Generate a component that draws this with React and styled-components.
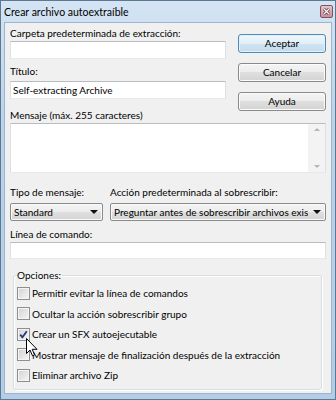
import React from "react";
import styled, { createGlobalStyle } from "styled-components";

const GlobalStyle = createGlobalStyle`
  html, body {
    margin: 0;
    padding: 0;
    background: #ffffff;
  }
  body {
    font-family: Lato, "Noto Sans", sans-serif;
    font-size: 10px;
    color: #000000;
  }
  * {
    box-sizing: border-box;
  }
`;

const Window = styled.div`
  position: relative;
  width: 336px;
  height: 400px;
  display: flex;
  flex-direction: column;
  border: 1px solid #5b7a92;
  padding: 0 3px 5px 3px;
  background: linear-gradient(#d4e4f4, #bcd3ea 30%, #b4cde6);
`;

const TitleBar = styled.div`
  height: 21px;
  margin: 0 -3px;
  padding: 0 2px 0 3px;
  display: flex;
  align-items: center;
  justify-content: space-between;
`;

const Title = styled.span`
  font-size: 10.5px;
  color: #000000;
`;

const CloseButton = styled.div`
  width: 13px;
  height: 13px;
  margin-top: -1px;
  border: 1px solid #7d5663;
  border-radius: 2px;
  background: linear-gradient(#e9c4cb, #c98b98);
  display: flex;
  align-items: center;
  justify-content: center;
`;

const Body = styled.div`
  flex: 1;
  min-width: 0;
  display: flex;
  flex-direction: column;
  background: #f0f0f0;
  border: 1px solid #9db5cc;
  padding: 3px 5px 0 5px;
`;

const TopRow = styled.div`
  display: flex;
  gap: 12px;
`;

const LeftColumn = styled.div`
  width: 216px;
  display: flex;
  flex-direction: column;
`;

const ButtonColumn = styled.div`
  width: 88px;
  padding-top: 8px;
  display: flex;
  flex-direction: column;
  gap: 10px;
`;

const Label = styled.div`
  height: 15px;
  line-height: 15px;
  white-space: nowrap;
  margin-top: ${(p) => p.$top || 0}px;
`;

const TextInput = styled.div`
  height: ${(p) => p.$height || 18}px;
  margin-top: ${(p) => p.$top || 0}px;
  background: #ffffff;
  border: 1px solid #dbdfe6;
  border-top-color: #b9bcc2;
  border-bottom-color: #e3e9ef;
  padding: 0 2px;
  line-height: 16px;
  white-space: nowrap;
  overflow: hidden;
`;

const Button = styled.div`
  height: 19px;
  border: 1px solid ${(p) => (p.$default ? "#4f8ab6" : "#8a8a8a")};
  border-radius: 3px;
  box-shadow: inset 0 0 0 1px ${(p) => (p.$default ? "#e3f1fa" : "#fbfbfb")};
  background: ${(p) =>
    p.$default
      ? "linear-gradient(#eef6fb 0%, #e2eff8 50%, #cfe4f2 50%, #c3dcee 100%)"
      : "linear-gradient(#f4f4f4 0%, #ececec 50%, #dfdfdf 50%, #d3d3d3 100%)"};
  display: flex;
  align-items: center;
  justify-content: center;
  line-height: 15px;
`;

const MessageBox = styled.div`
  height: 50px;
  display: flex;
  background: #ffffff;
  border: 1px solid #dbdfe6;
  border-top-color: #b9bcc2;
  border-bottom-color: #e3e9ef;
`;

const MessageArea = styled.div`
  flex: 1;
`;

const ScrollBar = styled.div`
  width: 17px;
  background: #f3f3f3;
  display: flex;
  flex-direction: column;
  justify-content: space-between;
  align-items: center;
  padding: 4px 0 4px 0;
`;

const Arrow = styled.span`
  width: 0;
  height: 0;
  border-left: 3px solid transparent;
  border-right: 3px solid transparent;
  ${(p) =>
    p.$up
      ? "border-bottom: 3px solid #b5b5b5;"
      : "border-top: 3px solid #b5b5b5;"}
`;

const SelectGrid = styled.div`
  margin-top: 12px;
  display: grid;
  grid-template-columns: 93px minmax(0, 1fr);
  column-gap: 7px;
`;

const SelectCell = styled.div`
  display: flex;
  flex-direction: column;
  gap: 3px;
  min-width: 0;
`;

const Select = styled.div`
  height: 18px;
  display: flex;
  align-items: center;
  border: 1px solid #8a8a8a;
  border-radius: 2px;
  box-shadow: inset 0 0 0 1px #fbfbfb;
  background: linear-gradient(#f4f4f4 0%, #ececec 50%, #dfdfdf 50%, #d3d3d3 100%);
  padding: 0 0 0 3px;
`;

const SelectText = styled.span`
  flex: 1;
  min-width: 0;
  white-space: nowrap;
  overflow: hidden;
  line-height: 15px;
`;

const SelectArrow = styled.span`
  width: 17px;
  flex-shrink: 0;
  display: flex;
  justify-content: center;
  &::after {
    content: "";
    border-left: 4px solid transparent;
    border-right: 4px solid transparent;
    border-top: 4px solid #111111;
  }
`;

const Group = styled.fieldset`
  min-width: 0;
  margin: 9px 4px 0 3px;
  padding: 0 3px 3px 3px;
  border: 1px solid #d5dfe5;
  border-radius: 3px;
  box-shadow: inset 1px 1px 0 #ffffff, 1px 1px 0 #ffffff;
`;

const Legend = styled.legend`
  padding: 0 1px 0 0;
  line-height: 15px;
`;

const CheckRow = styled.div`
  height: 20.5px;
  display: flex;
  align-items: center;
  gap: 2px;
  white-space: nowrap;
`;

const CheckBox = styled.span`
  width: 13px;
  height: 13px;
  flex-shrink: 0;
  border: 1px solid #8f8f8f;
  background: linear-gradient(135deg, #d2d2d2, #f6f6f6);
  box-shadow: inset 0 0 0 1px #f4f4f4;
  display: flex;
  align-items: center;
  justify-content: center;
`;

const Cursor = styled.svg`
  position: absolute;
  left: 25px;
  top: 337px;
`;

const options = [
  { label: "Permitir evitar la línea de comandos", checked: false },
  { label: "Ocultar la acción sobrescribir grupo", checked: false },
  { label: "Crear un SFX autoejecutable", checked: true },
  { label: "Mostrar mensaje de finalización después de la extracción", checked: false },
  { label: "Eliminar archivo Zip", checked: false },
];

export default function App() {
  return (
    <>
      <GlobalStyle />
      <Window>
        <TitleBar>
          <Title>Crear archivo autoextraíble</Title>
          <CloseButton>
            <svg width="7" height="7" viewBox="0 0 7 7">
              <path d="M1 1 L6 6 M6 1 L1 6" stroke="#4a2a33" strokeWidth="2.6" />
              <path d="M1 1 L6 6 M6 1 L1 6" stroke="#ffffff" strokeWidth="1.3" />
            </svg>
          </CloseButton>
        </TitleBar>
        <Body>
          <TopRow>
            <LeftColumn>
              <Label>Carpeta predeterminada de extracción:</Label>
              <TextInput />
              <Label $top={5}>Título:</Label>
              <TextInput $top={2}>Self-extracting Archive</TextInput>
              <Label $top={9}>Mensaje (máx. 255 caracteres)</Label>
            </LeftColumn>
            <ButtonColumn>
              <Button $default>Aceptar</Button>
              <Button>Cancelar</Button>
              <Button>Ayuda</Button>
            </ButtonColumn>
          </TopRow>
          <MessageBox>
            <MessageArea />
            <ScrollBar>
              <Arrow $up />
              <Arrow />
            </ScrollBar>
          </MessageBox>
          <SelectGrid>
            <SelectCell>
              <Label>Tipo de mensaje:</Label>
              <Select>
                <SelectText>Standard</SelectText>
                <SelectArrow />
              </Select>
            </SelectCell>
            <SelectCell>
              <Label>Acción predeterminada al sobrescribir:</Label>
              <Select>
                <SelectText>Preguntar antes de sobrescribir archivos existentes</SelectText>
                <SelectArrow />
              </Select>
            </SelectCell>
          </SelectGrid>
          <Label $top={6}>Línea de comando:</Label>
          <TextInput $height={17} />
          <Group>
            <Legend>Opciones:</Legend>
            {options.map((o) => (
              <CheckRow key={o.label}>
                <CheckBox>
                  {o.checked && (
                    <svg width="9" height="9" viewBox="0 0 9 9">
                      <path d="M1.2 4.6 L3.4 7.2 L7.8 1.2" fill="none" stroke="#1f3a7a" strokeWidth="1.8" />
                    </svg>
                  )}
                </CheckBox>
                {o.label}
              </CheckRow>
            ))}
          </Group>
        </Body>
        <Cursor width="12" height="19" viewBox="0 0 12 19">
          <path
            d="M0.5 0.5 L0.5 15.5 L4 12 L6.5 17.8 L8.6 16.9 L6.2 11.3 L11 11.3 Z"
            fill="#ffffff"
            stroke="#000000"
            strokeWidth="1"
          />
        </Cursor>
      </Window>
    </>
  );
}
